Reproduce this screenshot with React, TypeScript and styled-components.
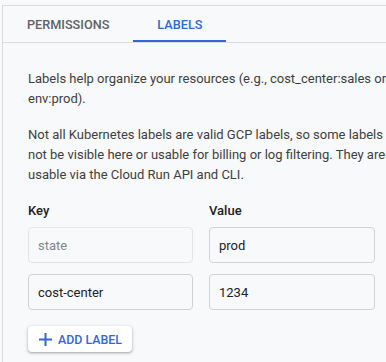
import React from 'react'
import styled, { createGlobalStyle } from 'styled-components'

const GlobalStyle = createGlobalStyle`
  html, body {
    margin: 0;
    padding: 0;
    background: #f8f9fa;
    overflow: hidden;
  }
  body {
    font-family: Roboto, 'Liberation Sans', Arial, sans-serif;
    -webkit-font-smoothing: antialiased;
  }
`

const Page = styled.div`
  width: 386px;
  height: 362px;
  padding-top: 5px;
  box-sizing: border-box;
  overflow: hidden;
`

const Panel = styled.div`
  width: 440px;
  margin-left: 2px;
  height: 100%;
  border-top: 1px solid #dadce0;
  border-left: 1px solid #dadce0;
  background: #f8f9fa;
`

const TabBar = styled.div`
  display: flex;
  height: 36px;
  border-bottom: 1px solid #dadce0;
`

const Tab = styled.div<{ $active?: boolean }>`
  display: flex;
  align-items: center;
  padding: 0 24px;
  font-size: 12.7px;
  font-weight: 500;
  text-transform: uppercase;
  color: ${(p) => (p.$active ? '#3367d6' : '#5f6368')};
  box-shadow: ${(p) => (p.$active ? 'inset 0 -2px 0 #3367d6' : 'none')};
`

const Content = styled.div`
  width: 392px;
  padding: 26px 0 0 25px;
`

const Paragraph = styled.p`
  margin: 0 0 16px;
  font-size: 13px;
  line-height: 20px;
  color: #3c4043;
`

const Grid = styled.div`
  display: grid;
  grid-template-columns: 165px 166px;
  column-gap: 16px;
  row-gap: 11px;
`

const ColumnHead = styled.div`
  font-size: 13px;
  font-weight: 500;
  line-height: 20px;
  color: #202124;
  margin-bottom: -5px;
`

const Field = styled.input`
  box-sizing: border-box;
  height: 36px;
  width: 100%;
  padding: 0 9px;
  border: 1px solid #d0d3d6;
  border-radius: 4px;
  background: #f8f9fa;
  font-family: inherit;
  font-size: 13px;
  color: #202124;
  outline: none;

  &:disabled {
    border-color: #e3e5e8;
    color: #80868b;
  }
`

const AddButton = styled.button`
  display: inline-flex;
  align-items: center;
  gap: 6px;
  margin-top: 16px;
  height: 26px;
  padding: 0 10px 0 11px;
  border: none;
  border-radius: 4px;
  background: #fff;
  box-shadow: 0 1px 2px rgba(60, 64, 67, 0.3), 0 1px 3px 1px rgba(60, 64, 67, 0.15);
  font-family: inherit;
  font-size: 12.4px;
  font-weight: 500;
  color: #3367d6;
  text-transform: uppercase;
  cursor: pointer;
`

const PlusIcon = () => (
  <svg width='13' height='13' viewBox='0 0 13 13'>
    <path d='M6.5 0v13M0 6.5h13' stroke='#3367d6' strokeWidth='2' />
  </svg>
)

const labels = [
  { key: 'state', value: 'prod', locked: true },
  { key: 'cost-center', value: '1234', locked: false },
]

export default function App() {
  return (
    <Page>
      <GlobalStyle />
      <Panel>
        <TabBar>
          <Tab>Permissions</Tab>
          <Tab $active>Labels</Tab>
        </TabBar>
        <Content>
          <Paragraph>
            Labels help organize your resources (e.g., cost_center:sales or env:prod).
          </Paragraph>
          <Paragraph>
            Not all Kubernetes labels are valid GCP labels, so some labels may not be visible here or
            usable for billing or log filtering. They are usable via the Cloud Run API and CLI.
          </Paragraph>
          <Grid>
            <ColumnHead>Key</ColumnHead>
            <ColumnHead>Value</ColumnHead>
            {labels.map((l) => (
              <React.Fragment key={l.key}>
                <Field defaultValue={l.key} disabled={l.locked} />
                <Field defaultValue={l.value} />
              </React.Fragment>
            ))}
          </Grid>
          <AddButton type='button'>
            <PlusIcon />
            Add label
          </AddButton>
        </Content>
      </Panel>
    </Page>
  )
}
